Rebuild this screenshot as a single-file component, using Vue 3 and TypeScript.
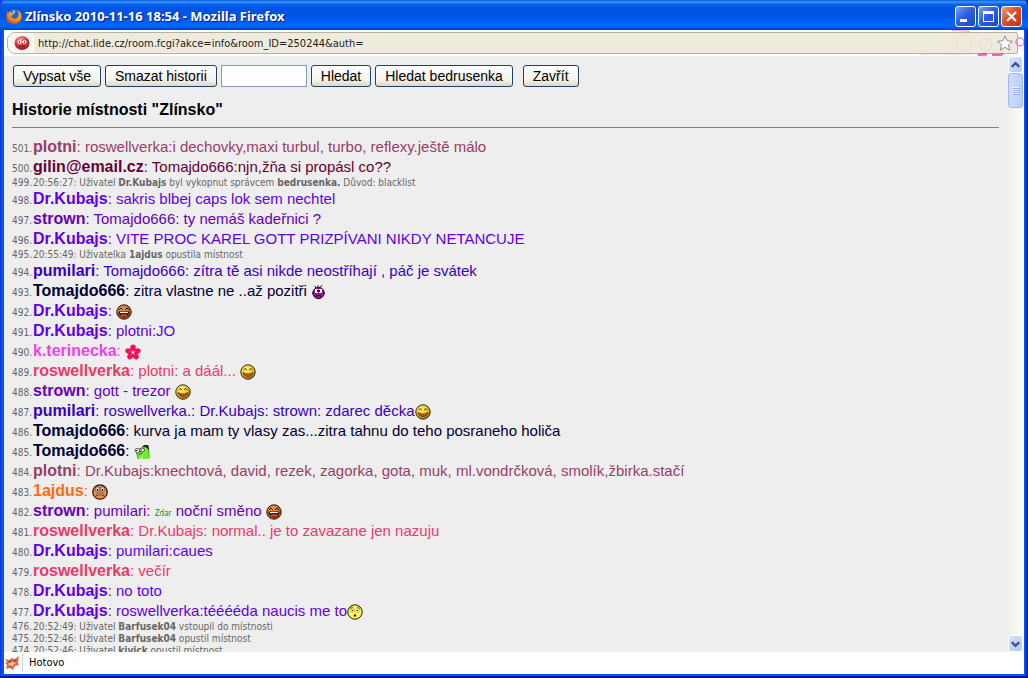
<script setup lang="ts">
import { ref } from 'vue'

type Part = { text: string; kind?: 'plain' | 'bold' | 'tiny' } | { icon: string }

interface Entry {
  no: number
  user?: string
  tone?: string
  parts: Part[]
}

const t = (text: string): Part => ({ text })
const b = (text: string): Part => ({ text, kind: 'bold' })
const i = (icon: string): Part => ({ icon })

const entries: Entry[] = [
  { no: 501, user: 'plotni', tone: 'wine', parts: [t('roswellverka:i dechovky,maxi turbul, turbo, reflexy.ještě málo')] },
  { no: 500, user: 'gilin@email.cz', tone: 'maroon', parts: [t('Tomajdo666:njn,žňa si propásl co??')] },
  { no: 499, parts: [t('20:56:27: Uživatel '), b('Dr.Kubajs'), t(' byl vykopnut správcem '), b('bedrusenka.'), t(' Důvod: blacklist')] },
  { no: 498, user: 'Dr.Kubajs', tone: 'violet', parts: [t('sakris blbej caps lok sem nechtel')] },
  { no: 497, user: 'strown', tone: 'purple', parts: [t('Tomajdo666: ty nemáš kadeřnici ?')] },
  { no: 496, user: 'Dr.Kubajs', tone: 'violet', parts: [t('VITE PROC KAREL GOTT PRIZPÍVANI NIKDY NETANCUJE')] },
  { no: 495, parts: [t('20:55:49: Uživatelka '), b('1ajdus'), t(' opustila místnost')] },
  { no: 494, user: 'pumilari', tone: 'indigo', parts: [t('Tomajdo666: zítra tě asi nikde neostříhají , páč je svátek')] },
  { no: 493, user: 'Tomajdo666', tone: 'navy', parts: [t('zitra vlastne ne ..až pozitři '), i('plum')] },
  { no: 492, user: 'Dr.Kubajs', tone: 'violet', parts: [i('laugh')] },
  { no: 491, user: 'Dr.Kubajs', tone: 'violet', parts: [t('plotni:JO')] },
  { no: 490, user: 'k.terinecka', tone: 'pink', parts: [i('flower')] },
  { no: 489, user: 'roswellverka', tone: 'rose', parts: [t('plotni: a dáál... '), i('smile')] },
  { no: 488, user: 'strown', tone: 'purple', parts: [t('gott - trezor '), i('smile')] },
  { no: 487, user: 'pumilari', tone: 'indigo', parts: [t('roswellverka.: Dr.Kubajs: strown: zdarec děcka'), i('smile')] },
  { no: 486, user: 'Tomajdo666', tone: 'navy', parts: [t('kurva ja mam ty vlasy zas...zitra tahnu do teho posraneho holiča')] },
  { no: 485, user: 'Tomajdo666', tone: 'navy', parts: [i('sick')] },
  { no: 484, user: 'plotni', tone: 'wine', parts: [t('Dr.Kubajs:knechtová, david, rezek, zagorka, gota, muk, ml.vondrčková, smolík,žbirka.stačí')] },
  { no: 483, user: '1ajdus', tone: 'orange', parts: [i('scared')] },
  { no: 482, user: 'strown', tone: 'purple', parts: [t('pumilari: '), { text: 'Zdar', kind: 'tiny' }, t(' noční směno '), i('laugh')] },
  { no: 481, user: 'roswellverka', tone: 'rose', parts: [t('Dr.Kubajs: normal.. je to zavazane jen nazuju')] },
  { no: 480, user: 'Dr.Kubajs', tone: 'violet', parts: [t('pumilari:caues')] },
  { no: 479, user: 'roswellverka', tone: 'rose', parts: [t('večír')] },
  { no: 478, user: 'Dr.Kubajs', tone: 'violet', parts: [t('no toto')] },
  { no: 477, user: 'Dr.Kubajs', tone: 'violet', parts: [t('roswellverka:tééééda naucis me to'), i('shy')] },
  { no: 476, parts: [t('20:52:49: Uživatel '), b('Barfusek04'), t(' vstoupil do místnosti')] },
  { no: 475, parts: [t('20:52:46: Uživatel '), b('Barfusek04'), t(' opustil místnost')] },
  { no: 474, parts: [t('20:52:46: Uživatel '), b('kivick'), t(' opustil místnost')] },
]

const query = ref('')
</script>

<template>
  <svg class="sprites" aria-hidden="true">
    <defs>
      <radialGradient id="g-gold" cx=".4" cy=".3" r=".7">
        <stop offset="0" stop-color="#fff27a" /><stop offset=".6" stop-color="#efc52a" /><stop offset="1" stop-color="#9a6a10" />
      </radialGradient>
      <radialGradient id="g-brown" cx=".4" cy=".3" r=".7">
        <stop offset="0" stop-color="#f0a050" /><stop offset="1" stop-color="#a85016" />
      </radialGradient>
      <radialGradient id="g-fox" cx=".6" cy=".3" r=".8">
        <stop offset="0" stop-color="#ffd23c" /><stop offset=".6" stop-color="#f5821e" /><stop offset="1" stop-color="#c03a10" />
      </radialGradient>
      <radialGradient id="g-red" cx=".4" cy=".25" r=".8">
        <stop offset="0" stop-color="#f79a9a" /><stop offset=".5" stop-color="#dc3c40" /><stop offset="1" stop-color="#9c1520" />
      </radialGradient>
    </defs>
    <symbol id="plum" viewBox="0 0 16 16">
      <path d="M5 5L4 2M7 4V1M9 4l2-3" stroke="#3a1838" />
      <circle cx="7.500" cy="9" r="5.700" fill="#8c1a86" stroke="#2c0630" />
      <path d="M1 9h2M12 9h2" stroke="#2c0630" />
      <path d="M4 5h3v4H4zM8 5h3v4H8z" fill="#fff" />
      <path d="M6 6h1v2H6zM8 6h1v2H8zM5 12l1-1h3l1 1v1H9v-1H6v1H5z" fill="#210425" />
    </symbol>
    <symbol id="laugh" viewBox="0 0 16 16">
      <circle cx="8" cy="8" r="7.200" fill="url(#g-brown)" stroke="#301505" />
      <path d="M3 6l2-2 2 2M9 6l2-2 2 2" fill="none" stroke="#301505" />
      <path d="M3 8h10c0 3-2 5-5 5S3 11 3 8z" fill="#7e100c" stroke="#301505" />
      <path d="M4 8h8v1H4z" fill="#fff" />
      <path d="M5 11.500h6" stroke="#e85a40" stroke-width="1.500" />
    </symbol>
    <symbol id="flower" viewBox="0 0 16 16">
      <g fill="#f01060">
        <ellipse cx="8" cy="4" rx="2.800" ry="3.500" />
        <ellipse cx="8" cy="4" rx="2.800" ry="3.500" transform="rotate(72 8 8.500)" />
        <ellipse cx="8" cy="4" rx="2.800" ry="3.500" transform="rotate(144 8 8.500)" />
        <ellipse cx="8" cy="4" rx="2.800" ry="3.500" transform="rotate(216 8 8.500)" />
        <ellipse cx="8" cy="4" rx="2.800" ry="3.500" transform="rotate(288 8 8.500)" />
        <circle cx="8" cy="8.500" r="3" />
      </g>
      <path d="M8 6v2.500l2.500-1M8 8.500l1.500 2M8 8.500l-1.500 2M8 8.500l-2.500-1" stroke="#ffa0c0" stroke-width=".8" fill="none" />
      <circle cx="8" cy="8.500" r="1" fill="#fff" />
    </symbol>
    <symbol id="smile" viewBox="0 0 16 16">
      <circle cx="8" cy="8" r="7.200" fill="url(#g-gold)" stroke="#3c2a06" />
      <path d="M3.500 6l1.500-1.500L7 6M9 6l2-1.500L12.500 6" fill="none" stroke="#3c2a06" stroke-width=".9" />
      <path d="M3 8.500c3 2 7 2 10 0-.5 3-2.500 4-5 4s-4.500-1-5-4z" fill="#c8501c" stroke="#5c3408" stroke-width=".8" />
    </symbol>
    <symbol id="sick" viewBox="0 0 16 16">
      <path d="M8 3l2-2h4l1 3v4l-2-1-1-3H8z" fill="#1c221a" />
      <path d="M3 8c1-3 4-5 7-5 3.500 0 5 3 5 7v5H4l-1-4 4-2z" fill="#78ea30" />
      <path d="M10 3c4 0 5 3 5 7v4M3 11l1 4" fill="none" stroke="#3f9a18" stroke-width=".8" />
      <ellipse cx="3.500" cy="6.500" rx="2.500" ry="2" fill="#fff" stroke="#1c301a" stroke-width=".8" />
      <ellipse cx="8" cy="6" rx="2.500" ry="2" fill="#fff" stroke="#1c301a" stroke-width=".8" />
      <path d="M2 6.500h1.500M6.500 6H8" stroke="#111" />
      <path d="M2 9.500c2 1 4 1 6-.5" stroke="#1c501a" fill="none" />
      <path d="M7 15l1-3 1 3z" fill="#d8f8c0" />
    </symbol>
    <symbol id="scared" viewBox="0 0 16 16">
      <circle cx="8" cy="8" r="7.200" fill="#ef9250" stroke="#351606" stroke-width="1.300" />
      <path d="M4 3h3v5H4zM9 3h3v5H9z" fill="#fff" stroke="#54290f" stroke-width=".7" />
      <path d="M5 5h1v2H5zM10 5h1v2h-1z" fill="#111" />
      <path d="M4 12l1-2h6l1 2-2-1H6z" fill="#fff" stroke="#54200c" stroke-width=".7" />
    </symbol>
    <symbol id="shy" viewBox="0 0 16 16">
      <circle cx="8" cy="8" r="7.200" fill="#fff45a" stroke="#1c1a06" />
      <path d="M4 5h3v3H4zM9 5h3v3H9z" fill="#fff" stroke="#8a8030" stroke-width=".5" />
      <path d="M3 4.500l3-1.500M10 3l3 1.500" stroke="#3a3408" stroke-width=".8" fill="none" />
      <path d="M5 6h1v1H5zM10 6h1v1h-1z" fill="#222" />
      <ellipse cx="8" cy="11.500" rx="1.300" ry="1.300" fill="#4a2a08" />
    </symbol>
  </svg>

  <div class="window">
    <header class="titlebar">
      <svg class="app-icon" viewBox="0 0 16 16" aria-hidden="true">
        <circle cx="8.500" cy="7.500" r="6.500" fill="#2a62b8" />
        <path d="M7 2c2 0 3 1 2 3L6 6z" fill="#7cc4f4" />
        <path d="M1 2c0 1 .5 2 1 2.500L5 3c0 2 1 2.500 3 3-1 1-2 1-3 2 1 3 5 4 7 1 1.500-2 .5-5-1-7 3 1 5 4 4.500 7.500C15 13.500 12 16 8 16 3 16 0 12.500 .5 8 .5 5.500 1 4 1 2z" fill="url(#g-fox)" />
      </svg>
      <h1 class="title">Zlínsko 2010-11-16 18:54 - Mozilla Firefox</h1>
      <div class="controls">
        <button class="ctl" type="button" aria-label="Minimalizovat">
          <svg viewBox="0 0 19 19"><path d="M4 12h7v3H4z" fill="#fff" /></svg>
        </button>
        <button class="ctl" type="button" aria-label="Maximalizovat">
          <svg viewBox="0 0 19 19"><path d="M4 4h11v11H4zM5 7v7h9V7z" fill="#fff" fill-rule="evenodd" /></svg>
        </button>
        <button class="ctl close" type="button" aria-label="Zavřít okno">
          <svg viewBox="0 0 19 19"><path d="M5 5l9 9M14 5l-9 9" stroke="#fff" stroke-width="2.200" /></svg>
        </button>
      </div>
    </header>

    <div class="navbar">
      <svg class="swirl" viewBox="0 0 110 26" aria-hidden="true">
        <g fill="none" stroke="#f06cc0">
          <path d="M0 25c20-3 36 2 60-2" opacity=".25" />
          <circle cx="44" cy="13" r="8" opacity=".12" />
          <circle cx="66" cy="15" r="6" opacity=".2" />
          <path d="M32 1c6-2 12 1 18 0" stroke-width="1.500" opacity=".5" />
          <path d="M58 25c4-1 6 0 9-1M72 25c5 0 8 0 11-1" stroke="#d8249c" stroke-width="2.500" opacity=".7" />
          <circle cx="100" cy="12" r="4" stroke-width="1.500" opacity=".8" />
        </g>
      </svg>
      <div class="address">
        <span class="favicon">
          <svg viewBox="0 0 16 16" aria-hidden="true">
            <ellipse cx="8" cy="8" rx="7.500" ry="7" fill="url(#g-red)" />
            <ellipse cx="5.500" cy="7" rx="2" ry="1.800" fill="#fff" /><ellipse cx="10.500" cy="7" rx="2" ry="1.800" fill="#fff" />
            <path d="M5 7h1M10 7h1" stroke="#222" stroke-width="1.500" />
            <path d="M5 12c2-1 4-1 6 0" stroke="#6c0c14" fill="none" />
          </svg>
        </span>
        <input class="url" aria-label="Adresa" readonly value="http://chat.lide.cz/room.fcgi?akce=info&amp;room_ID=250244&amp;auth=" />
        <button class="star" type="button" aria-label="Přidat do záložek">
          <svg viewBox="0 0 16 16"><path d="M8 1l2.200 4.800 5.300.5-4 3.500 1.200 5.300L8 12.300l-4.700 2.800 1.200-5.300-4-3.500 5.300-.5z" fill="#fff" stroke="#8f8a8c" stroke-linejoin="round" /></svg>
        </button>
      </div>
    </div>

    <div class="body">
      <main class="page">
        <form class="tools" @submit.prevent>
          <button class="btn" type="button">Vypsat vše</button>
          <button class="btn" type="button">Smazat historii</button>
          <input v-model="query" class="query" type="text" aria-label="Hledaný text" />
          <button class="btn" type="submit">Hledat</button>
          <button class="btn" type="button">Hledat bedrusenka</button>
          <button class="btn last" type="button">Zavřít</button>
        </form>
        <h2 class="heading">Historie místnosti "Zlínsko"</h2>
        <hr class="rule" />
        <ol class="log">
          <li v-for="e in entries" :key="e.no" class="entry" :class="e.user ? ['chat', e.tone] : 'info'">
            <span class="no">{{ e.no }}.</span>
            <span class="msg"><template v-if="e.user"><b>{{ e.user }}</b>{{ ': ' }}</template><template v-for="(p, k) in e.parts" :key="k"><svg v-if="'icon' in p" class="emo" aria-hidden="true"><use :href="'#' + p.icon" /></svg><b v-else-if="p.kind === 'bold'">{{ p.text }}</b><span v-else-if="p.kind === 'tiny'" class="tiny">{{ p.text }}</span><template v-else>{{ p.text }}</template></template></span>
          </li>
        </ol>
      </main>
      <div class="scrollbar">
        <button class="arrow" type="button" aria-label="Nahoru"><svg viewBox="0 0 14 14"><path d="M3 9l4-4 4 4" /></svg></button>
        <div class="thumb"><i></i><i></i><i></i><i></i></div>
        <button class="arrow down" type="button" aria-label="Dolů"><svg viewBox="0 0 14 14"><path d="M3 5l4 4 4-4" /></svg></button>
      </div>
    </div>

    <footer class="status">
      <svg class="fox" viewBox="0 0 16 16" aria-hidden="true">
        <path d="M1 4l4 1 3-2 3 1 4-3-1 6 1 3-4 1-2 4-3-2-4 1 1-4-2-2 2-1z" fill="#dd6a48" />
        <path d="M4 9l4-2 4 1-3 2-1 3-2-2z" fill="#f8c8a8" />
        <path d="M5 6l2 1M10 6l2-1M6 11l2 1" stroke="#7c2414" />
      </svg>
      <span class="state">Hotovo</span>
    </footer>
  </div>
</template>

<style>
body {
  margin: 0;
  background: #0a3fd0;
}
</style>

<style scoped>
.sprites {
  position: absolute;
  width: 0;
  height: 0;
}
.window {
  box-sizing: border-box;
  height: 100vh;
  display: flex;
  flex-direction: column;
  padding: 0 4px 4px;
  background: linear-gradient(90deg, #0831d9 0, #0855ea 2px, #0855ea calc(100% - 3px), #00138c 100%);
  box-shadow: inset 0 -2px 0 #00189c;
  font-family: "DejaVu Sans Condensed", "DejaVu Sans", sans-serif;
}
.titlebar {
  flex: none;
  display: flex;
  align-items: center;
  height: 30px;
  margin: 0 -4px;
  padding: 2px 6px 0;
  box-sizing: border-box;
  border-radius: 7px 7px 0 0;
  background: linear-gradient(#0a58d8 0, #3c98ff 2px, #0a66ee 4px, #0054e0 8px, #0055e4 16px, #0066ff 24px, #0062f8 27px, #003cc4 30px);
}
.app-icon {
  width: 16px;
  height: 16px;
}
.title {
  flex: 1;
  margin: 0 0 0 3px;
  color: #fff;
  font: bold 13px/20px "Noto Sans", sans-serif;
  text-shadow: 1px 1px 1px #0a1883;
}
.controls {
  display: flex;
  gap: 2px;
}
.ctl {
  width: 21px;
  height: 21px;
  padding: 0;
  border: 1px solid #fff;
  border-radius: 3px;
  background: linear-gradient(135deg, #7ba2f2, #2e5fe0 45%, #1a48cc);
}
.ctl.close {
  background: linear-gradient(135deg, #f0a088, #df4d26 45%, #c03410);
}
.ctl svg {
  display: block;
  width: 19px;
  height: 19px;
}
.navbar {
  flex: none;
  position: relative;
  height: 26px;
  box-sizing: border-box;
  padding: 2px 6px 2px 3px;
  background: #fff;
}
.swirl {
  position: absolute;
  z-index: 1;
  right: -6px;
  top: 0;
  width: 110px;
  height: 26px;
  clip-path: inset(0 6px 0 0);
  pointer-events: none;
}
.address {
  display: flex;
  align-items: center;
  height: 22px;
  box-sizing: border-box;
  border: 1px solid #b5b2a4;
  border-radius: 8px 2px 2px 8px;
  background: #eeebdd;
  overflow: hidden;
}
.favicon {
  display: flex;
  align-items: center;
  width: 26px;
  height: 20px;
  padding-left: 6px;
  box-sizing: border-box;
  background: #f8f7f2;
}
.favicon svg {
  width: 16px;
  height: 16px;
}
.url {
  flex: 1;
  min-width: 0;
  padding: 2px 4px 0;
  border: 0;
  background: none;
  color: #1c1c1c;
  font: 11px/18px "DejaVu Sans Condensed", "DejaVu Sans", sans-serif;
  outline: 0;
}
.star {
  position: relative;
  z-index: 2;
  width: 16px;
  height: 16px;
  margin-right: 4px;
  padding: 0;
  border: 0;
  background: none;
}
.star svg {
  display: block;
  width: 16px;
  height: 16px;
}
.body {
  flex: 1;
  min-height: 0;
  display: flex;
  background: #eee;
}
.page {
  flex: 1;
  min-width: 0;
  padding: 8px 9px 0 8px;
  overflow: hidden;
  color: #000;
  font-family: "Liberation Sans", Arial, sans-serif;
}
.tools {
  display: flex;
  gap: 4px;
  padding: 1px;
}
.btn {
  height: 22px;
  padding: 0 9px;
  border: 1px solid #1d4468;
  border-radius: 3px;
  background: linear-gradient(#fff, #f3f2ec 70%, #dcd8ca);
  color: #000;
  font: 14px/20px "Liberation Sans", Arial, sans-serif;
}
.btn.last {
  margin-left: 6px;
}
.query {
  width: 86px;
  height: 22px;
  box-sizing: border-box;
  padding: 1px 3px;
  border: 1px solid #7f9db9;
  background: #fff;
  font: 14px/18px "Liberation Sans", Arial, sans-serif;
}
.heading {
  margin: 12px 0 8px;
  font-size: 16px;
  line-height: 19px;
}
.rule {
  height: 1px;
  margin: 0 0 9px;
  border: 0;
  background: #808080;
}
.log {
  margin: 0;
  padding: 0;
  list-style: none;
}
.entry {
  display: grid;
  grid-template-columns: 21px 1fr;
  align-items: baseline;
}
.no,
.info {
  color: #666;
  font: 10px/12px "DejaVu Sans Condensed", "DejaVu Sans", sans-serif;
}
.msg {
  white-space: pre-wrap;
}
.chat .msg {
  font-size: 15px;
  line-height: 20px;
}
.chat b {
  font-size: 16px;
}
.emo {
  width: 16px;
  height: 16px;
  vertical-align: -4px;
}
.tiny {
  color: #128a22;
  font: 8px/12px "DejaVu Sans Condensed", "DejaVu Sans", sans-serif;
}
.wine .msg { color: #993d66; }
.maroon .msg { color: #660033; }
.violet .msg { color: #6200e0; }
.purple .msg { color: #6600b8; }
.indigo .msg { color: #3a00c0; }
.navy .msg { color: #000033; }
.pink .msg { color: #e845e8; }
.rose .msg { color: #ea3a6a; }
.orange .msg { color: #ff6a10; }
.scrollbar {
  flex: none;
  width: 16px;
  display: flex;
  flex-direction: column;
  background: linear-gradient(90deg, #f0f0e8, #fefefa);
}
.arrow {
  width: 15px;
  height: 17px;
  padding: 0;
  border: 1px solid #fff;
  border-radius: 3px;
  background: linear-gradient(135deg, #d6e2ff, #b4c8f6);
}
.arrow.down {
  margin-top: auto;
}
.arrow svg {
  display: block;
  width: 13px;
  height: 14px;
}
.arrow path {
  fill: none;
  stroke: #3c5488;
  stroke-width: 2.400;
}
.thumb {
  width: 15px;
  height: 35px;
  box-sizing: border-box;
  display: flex;
  flex-direction: column;
  align-items: center;
  justify-content: center;
  gap: 1px;
  border: 1px solid #a4b8ea;
  border-radius: 3px;
  background: linear-gradient(90deg, #cfdcff, #b9cdfb);
}
.thumb i {
  width: 7px;
  height: 1px;
  background: #f2f6ff;
  box-shadow: 1px 1px 0 #93acec;
}
.status {
  flex: none;
  display: flex;
  align-items: center;
  height: 22px;
  background: #fff;
}
.fox {
  width: 16px;
  height: 16px;
}
.state {
  margin-left: 2px;
  padding-left: 6px;
  border-left: 1px solid #c4cfe0;
  color: #000;
  font-size: 11px;
  line-height: 18px;
}
</style>
